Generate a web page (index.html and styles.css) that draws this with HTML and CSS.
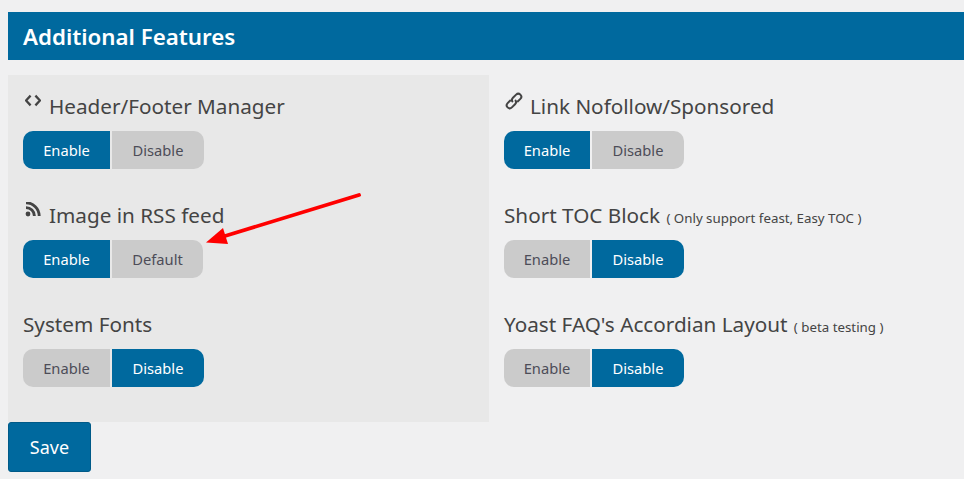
FILE: index.html
```html
<!DOCTYPE html>
<html lang="en">
<head>
<meta charset="utf-8">
<title>Additional Features</title>
<link rel="stylesheet" href="styles.css">
</head>
<body>
<div class="page">
  <h2 class="banner">Additional Features</h2>
  <div class="columns">
    <div class="col col-left">
      <div class="feature">
        <h3 class="feature-title"><svg class="ico" viewBox="0 0 16 16"><path d="M5.600 2.600 1 7.500l4.600 4.900M10.400 2.600 15 7.500l-4.600 4.900" fill="none" stroke="#444" stroke-width="2.300"/></svg><span>Header/Footer Manager</span></h3>
        <div class="toggle"><span class="btn on first">Enable</span><span class="btn off last">Disable</span></div>
      </div>
      <div class="feature">
        <h3 class="feature-title"><svg class="ico" viewBox="0 1 16 16"><circle cx="3" cy="13" r="2.400" fill="#444"/><path d="M1 6.600a8.400 8.400 0 0 1 8.400 8.400M1 1.800A13.200 13.200 0 0 1 14.200 15" fill="none" stroke="#444" stroke-width="2.900"/></svg><span>Image in RSS feed</span></h3>
        <div class="toggle"><span class="btn on first">Enable</span><span class="btn off last short">Default</span></div>
      </div>
      <div class="feature">
        <h3 class="feature-title">System Fonts</h3>
        <div class="toggle"><span class="btn off first">Enable</span><span class="btn on last">Disable</span></div>
      </div>
    </div>
    <div class="col col-right">
      <div class="feature">
        <h3 class="feature-title"><svg class="ico" viewBox="0 0 18 18"><g transform="rotate(-45 9 9)" fill="none" stroke="#444" stroke-width="2"><path d="M10.500 9a3 3 0 0 1-3 3H3a3 3 0 0 1 0-6h4.500"/><path d="M7.500 9a3 3 0 0 1 3-3H15a3 3 0 0 1 0 6h-4.500"/></g></svg><span>Link Nofollow/Sponsored</span></h3>
        <div class="toggle"><span class="btn on first">Enable</span><span class="btn off last">Disable</span></div>
      </div>
      <div class="feature">
        <h3 class="feature-title">Short TOC Block <small>( Only support feast, Easy TOC )</small></h3>
        <div class="toggle"><span class="btn off first">Enable</span><span class="btn on last">Disable</span></div>
      </div>
      <div class="feature">
        <h3 class="feature-title">Yoast FAQ's Accordian Layout <small>( beta testing )</small></h3>
        <div class="toggle"><span class="btn off first">Enable</span><span class="btn on last">Disable</span></div>
      </div>
    </div>
  </div>
  <button class="save">Save</button>
  <svg class="arrow" width="170" height="60" viewBox="0 0 170 60"><path d="M154 2 20 43" stroke="#f00" stroke-width="3.800" stroke-linecap="round"/><path d="M1 49.500 18 35 23 51z" fill="#f00"/></svg>
</div>
</body>
</html>
```
FILE: styles.css
```css
* { box-sizing: border-box; }
html, body { margin: 0; padding: 0; }
body {
  background: #f0f0f1;
  font-family: "Noto Sans", "Open Sans", sans-serif;
  color: #444;
  overflow: hidden;
}
.page {
  position: relative;
  width: 964px;
  height: 479px;
  padding: 12px 0 0 8px;
}
.banner {
  margin: 0 0 15px;
  height: 48px;
  padding-left: 15px;
  background: #00699e;
  color: #fff;
  font-size: 22.300px;
  font-weight: 600;
  line-height: 50px;
}
.columns { display: flex; height: 347px; }
.col { flex: none; width: 481px; padding: 15px 15px 0; }
.col-left { background: #e8e8e8; }
.feature { height: 109px; }
.feature-title {
  display: flex;
  align-items: baseline;
  margin: 0 0 9px;
  height: 32px;
  font-size: 20.700px;
  font-weight: 400;
  line-height: 33px;
  white-space: pre-wrap;
  color: #444;
}
.feature-title small { font-size: 13.300px; margin-left: 1px; }
.ico {
  width: 16px;
  height: 16px;
  margin: 3px 8px 0 2px;
  align-self: flex-start;
}
.col-right .ico { width: 18px; height: 18px; margin: 2px 7px 0 1px; }
.toggle { display: flex; gap: 2px; height: 38px; }
.btn {
  display: flex;
  align-items: center;
  justify-content: center;
  width: 92px;
  height: 38px;
  font-size: 14.700px;
}
.btn.first { width: 87px; border-radius: 10px 0 0 10px; }
.col-right .btn.first { width: 86px; }
.btn.last { border-radius: 0 10px 10px 0; }
.btn.short { width: 91px; }
.on { background: #00699e; color: #fff; }
.off { background: #cbcbcb; color: #4d4d58; }
.save {
  display: block;
  width: 83px;
  height: 50px;
  border: 1px solid #005a88;
  border-radius: 3px;
  background: #00699e;
  color: #fff;
  font: 400 18px "Noto Sans", "Open Sans", sans-serif;
  padding: 0;
}
.arrow { position: absolute; left: 205px; top: 193px; }
```
